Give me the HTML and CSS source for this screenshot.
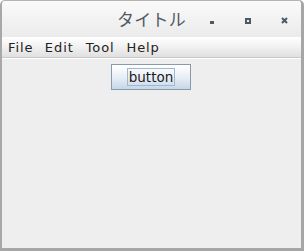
FILE: index.html
```html
<!DOCTYPE html>
<html lang="ja">
<head>
    <meta charset="UTF-8">
    <title>タイトル</title>
    <link rel="stylesheet" href="styles.css">
</head>
<body>
    <div class="window">
        <!--タイトルバー-->
        <div class="titlebar">
            <span class="title">タイトル</span>
            <div class="controls">
                <span class="ctl ctl-min"></span>
                <span class="ctl ctl-max"></span>
                <svg class="ctl ctl-close" width="7" height="7" viewBox="0 0 7 7">
                    <path d="M1 1L6 6M6 1L1 6" stroke="#4b5a66" stroke-width="2"/>
                </svg>
            </div>
        </div>
        <!--メニュー-->
        <ul class="menubar">
            <li>File</li>
            <li>Edit</li>
            <li>Tool</li>
            <li>Help</li>
        </ul>
        <div class="content">
            <button class="btn"><span class="focus">button</span></button>
        </div>
    </div>
</body>
</html>
```

FILE: styles.css
```css
*{
    margin: 0;
    padding: 0;
    box-sizing: border-box;
}
body{
    width: 304px;
    height: 251px;
    background-color: #ffffff;
    font-family: "DejaVu Sans", sans-serif;
}
.window{
    width: 304px;
    height: 251px;
    display: flex;
    flex-direction: column;
    background-color: #eeeeee;
    border-top: 1px solid #b4b4b4;
    border-left: 2px solid #a8a8a8;
    border-right: 3px solid #a6a6a6;
    border-bottom: 3px solid #a6a6a6;
    border-radius: 5px 5px 0 0;
    overflow: hidden;
}
/*タイトルバー*/
.titlebar{
    height: 36px;
    flex: none;
    position: relative;
    display: flex;
    align-items: center;
    background: linear-gradient(#fafafa, #ebebeb);
}
.titlebar .title{
    width: 100%;
    text-align: center;
    font-family: "Noto Sans CJK JP", sans-serif;
    font-size: 17px;
    color: #505b66;
    letter-spacing: 0.3px;
    margin-top: -1px;
}
.controls{
    position: absolute;
    top: 16px;
    left: 206px;
    display: flex;
    align-items: flex-end;
}
.ctl{
    display: block;
}
.ctl-min{
    width: 4px;
    height: 3px;
    margin-left: 2px;
    background-color: #4b5a66;
}
.ctl-max{
    width: 6px;
    height: 6px;
    margin-left: 31px;
    border: 2px solid #4b5a66;
}
.ctl-close{
    margin-left: 30px;
}
/*メニュー*/
.menubar{
    height: 21px;
    flex: none;
    list-style-type: none;
    display: flex;
    align-items: center;
    background: linear-gradient(#ffffff, #f4f4f4 40%, #e0e0e0);
    border-bottom: 1px solid #c8c8c8;
    font-size: 13px;
    color: #222222;
}
.menubar li{
    padding: 0 6px;
    letter-spacing: 0.9px;
}
.menubar li:first-child{
    padding-right: 5.5px;
}
.content{
    flex: 1;
    border-top: 1px solid #ffffff;
    display: flex;
    justify-content: center;
    align-items: flex-start;
    padding-top: 5px;
    padding-right: 1px;
}
.btn{
    width: 80px;
    height: 26px;
    border: 1px solid #8b9aab;
    background: linear-gradient(#ffffff, #e9eff6 50%, #c5d6e9);
    font-family: "DejaVu Sans", sans-serif;
    font-size: 13.5px;
    color: #1a1a1a;
    display: flex;
    justify-content: center;
    align-items: center;
}
.btn .focus{
    border: 1px solid #a3b7d1;
    padding: 0 1px;
    line-height: 16px;
}
```
